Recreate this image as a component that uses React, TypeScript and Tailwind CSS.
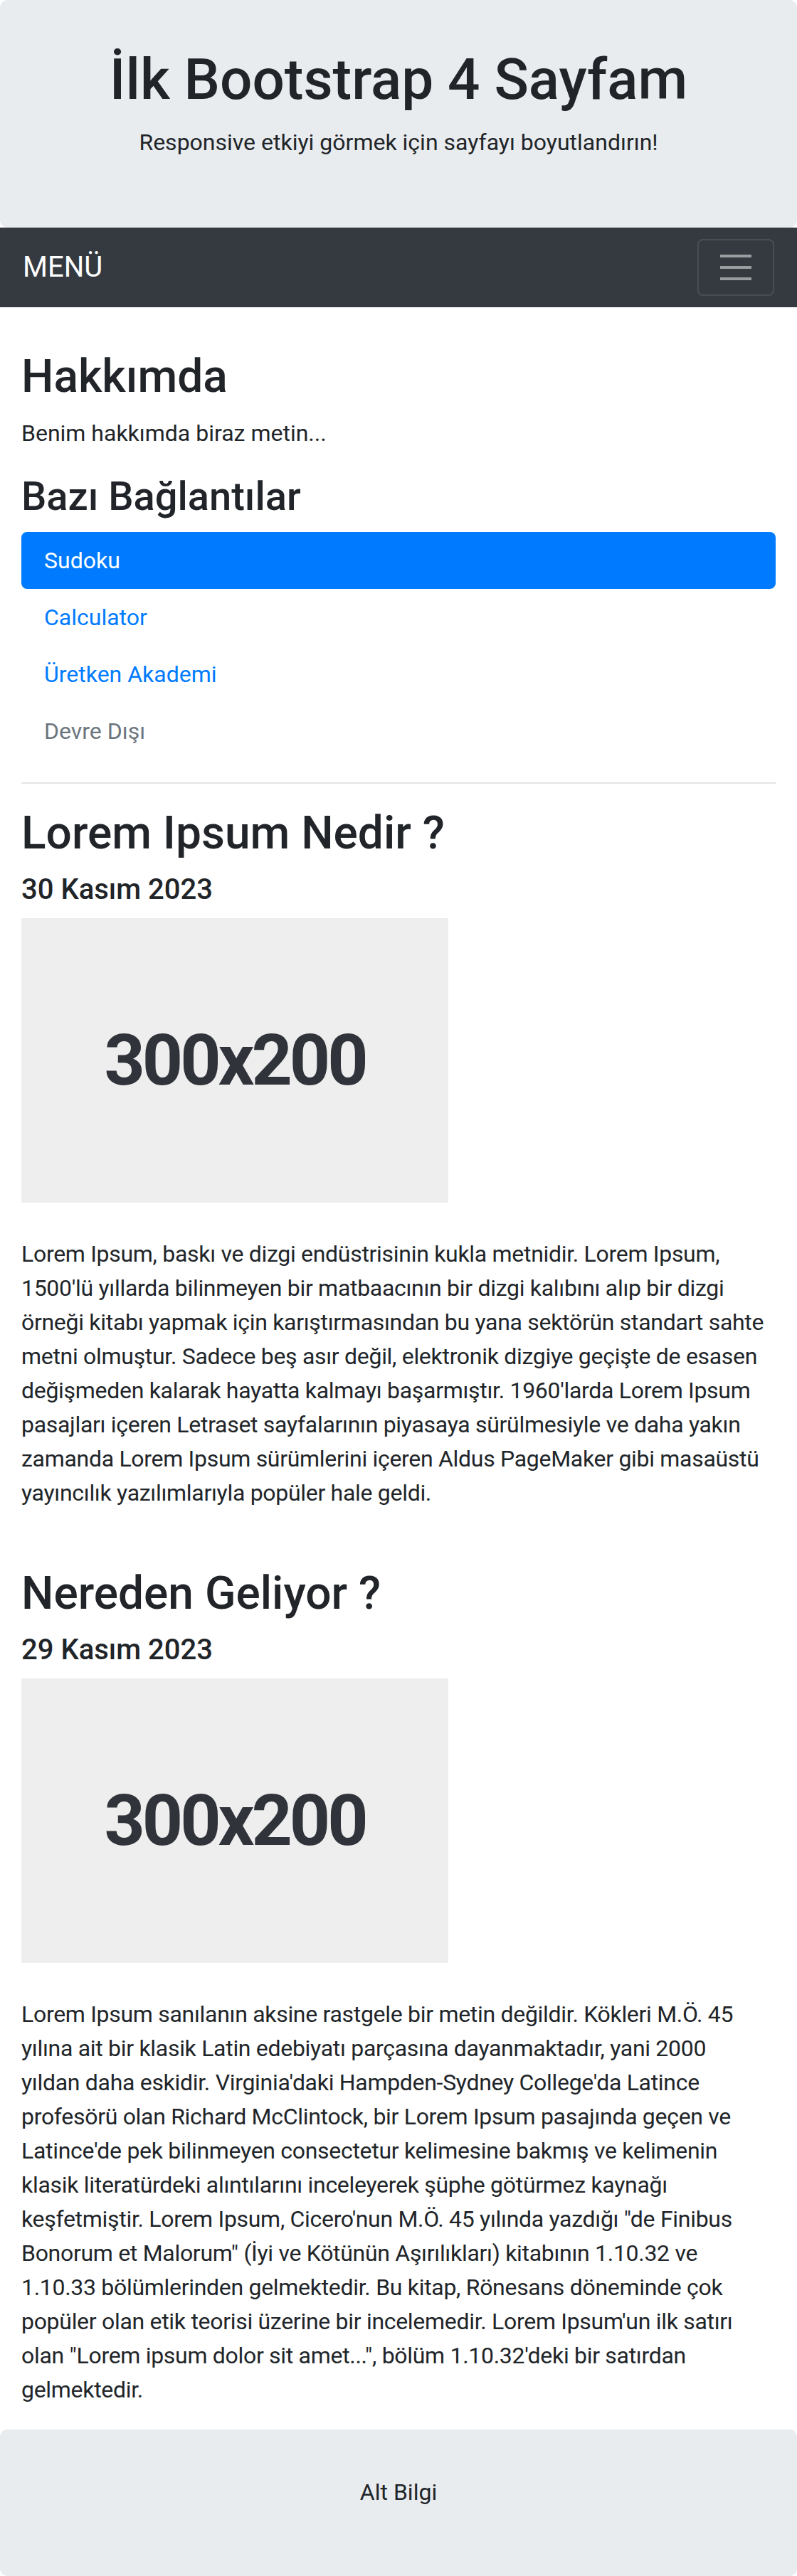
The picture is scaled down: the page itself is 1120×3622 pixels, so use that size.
const links = [
  { label: "Sudoku", active: true },
  { label: "Calculator" },
  { label: "Üretken Akademi" },
  { label: "Devre Dışı", disabled: true },
];

// paragraph lines are kept as they wrap in the design
const posts = [
  {
    title: "Lorem Ipsum Nedir ?",
    date: "30 Kasım 2023",
    lines: [
      "Lorem Ipsum, baskı ve dizgi endüstrisinin kukla metnidir. Lorem Ipsum,",
      "1500'lü yıllarda bilinmeyen bir matbaacının bir dizgi kalıbını alıp bir dizgi",
      "örneği kitabı yapmak için karıştırmasından bu yana sektörün standart sahte",
      "metni olmuştur. Sadece beş asır değil, elektronik dizgiye geçişte de esasen",
      "değişmeden kalarak hayatta kalmayı başarmıştır. 1960'larda Lorem Ipsum",
      "pasajları içeren Letraset sayfalarının piyasaya sürülmesiyle ve daha yakın",
      "zamanda Lorem Ipsum sürümlerini içeren Aldus PageMaker gibi masaüstü",
      "yayıncılık yazılımlarıyla popüler hale geldi.",
    ],
  },
  {
    title: "Nereden Geliyor ?",
    date: "29 Kasım 2023",
    lines: [
      "Lorem Ipsum sanılanın aksine rastgele bir metin değildir. Kökleri M.Ö. 45",
      "yılına ait bir klasik Latin edebiyatı parçasına dayanmaktadır, yani 2000",
      "yıldan daha eskidir. Virginia'daki Hampden-Sydney College'da Latince",
      "profesörü olan Richard McClintock, bir Lorem Ipsum pasajında geçen ve",
      "Latince'de pek bilinmeyen consectetur kelimesine bakmış ve kelimenin",
      "klasik literatürdeki alıntılarını inceleyerek şüphe götürmez kaynağı",
      "keşfetmiştir. Lorem Ipsum, Cicero'nun M.Ö. 45 yılında yazdığı \"de Finibus",
      "Bonorum et Malorum\" (İyi ve Kötünün Aşırılıkları) kitabının 1.10.32 ve",
      "1.10.33 bölümlerinden gelmektedir. Bu kitap, Rönesans döneminde çok",
      "popüler olan etik teorisi üzerine bir incelemedir. Lorem Ipsum'un ilk satırı",
      "olan \"Lorem ipsum dolor sit amet...\", bölüm 1.10.32'deki bir satırdan",
      "gelmektedir.",
    ],
  },
];

const TogglerIcon = () => (
  <svg viewBox="0 0 30 30" className="h-[60px] w-[60px]">
    <path
      d="M4 7h22M4 15h22M4 23h22"
      stroke="rgba(255,255,255,0.5)"
      strokeWidth="2"
      strokeLinecap="butt"
    />
  </svg>
);

const App = () => {
  return (
    <div className="w-[1120px] bg-white font-[Roboto] text-[32px] leading-12 text-[#212529]">
      {/* Jumbotron */}
      <div className="rounded-[10px] bg-[#e9ecef] px-8 pt-16 pb-16 text-center">
        <h1 className="mb-4 text-[80px] leading-[96px] font-medium">
          İlk Bootstrap 4 Sayfam
        </h1>
        <p className="mb-8">Responsive etkiyi görmek için sayfayı boyutlandırın!</p>
      </div>

      {/* Navbar */}
      <nav className="flex h-[112px] items-center justify-between bg-[#343a40] px-8">
        <span className="text-[40px] leading-[60px] text-white">MENÜ</span>
        <button className="flex h-[80px] w-[108px] items-center justify-center rounded-lg border-2 border-white/10">
          <TogglerIcon />
        </button>
      </nav>

      {/* Content */}
      <div className="px-[30px] pt-[60px]">
        <h2 className="mb-4 text-[64px] leading-[1.2] font-medium">Hakkımda</h2>
        <p className="mb-8">Benim hakkımda biraz metin...</p>

        <h3 className="mb-4 text-[56px] leading-[1.2] font-medium">Bazı Bağlantılar</h3>
        <ul className="flex flex-col">
          {links.map((link) => (
            <li
              key={link.label}
              className={
                link.active
                  ? "rounded-lg bg-[#007bff] px-8 py-4 text-white"
                  : link.disabled
                    ? "px-8 py-4 text-[#6c757d]"
                    : "px-8 py-4 text-[#007bff]"
              }
            >
              {link.label}
            </li>
          ))}
        </ul>

        <hr className="my-8 border-t-2 border-black/10" />

        {posts.map((post, i) => (
          <div key={post.title} className={i === 0 ? "pb-12" : ""}>
            <h2 className="mb-4 text-[64px] leading-[1.2] font-medium">{post.title}</h2>
            <h5 className="mb-4 text-[40px] leading-[1.2] font-medium">{post.date}</h5>
            <div className="mb-12 flex h-[400px] w-[600px] items-center justify-center bg-[#eeeeee]">
              <span className="text-[100px] leading-none font-bold tracking-[-4px] text-[#31333b]">
                300x200
              </span>
            </div>
            <p className="mb-8 whitespace-nowrap tracking-[-0.3px]">
              {post.lines.map((line, j) => (
                <span key={j}>
                  {line}
                  {j < post.lines.length - 1 && <br />}
                </span>
              ))}
            </p>
          </div>
        ))}
      </div>

      {/* Footer */}
      <div className="h-[206px] rounded-[10px] bg-[#e9ecef] pt-16 text-center">
        <p>Alt Bilgi</p>
      </div>
    </div>
  );
};

export default App;
